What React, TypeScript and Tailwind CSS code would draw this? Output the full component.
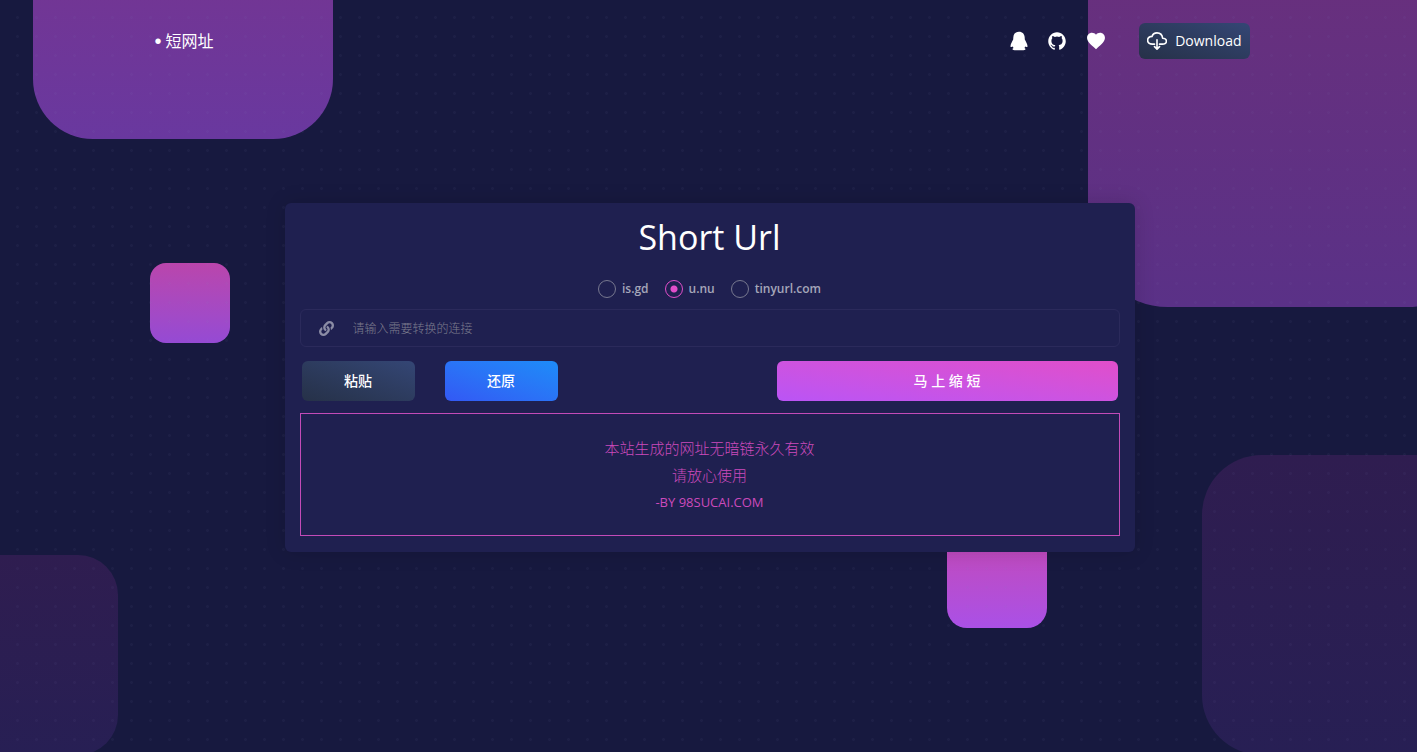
import type { ButtonHTMLAttributes } from 'react';
import { FaLink } from 'react-icons/fa';
import { IoMdHeart } from 'react-icons/io';
import { IoCloudDownloadOutline, IoLogoGithub } from 'react-icons/io5';

function QqIcon() {
  return (
    <svg viewBox="0 0 20 20" className="size-5 fill-current" aria-hidden="true">
      <path d="M10 .8C6.400.8 4.500 3.200 4.300 6.500L4.200 8.600C3.200 10.400 1.700 13 1.500 15c-.1.900.3 1.200.9 1.100l1.300-.5c.2.600.5 1.100.9 1.500-.8.200-1.200.6-1.100 1.100.2.800 1.500 1 3.300 1h6.400c1.800 0 3.100-.2 3.300-1 .1-.5-.3-.9-1.100-1.100.4-.4.7-.9.900-1.500l1.300.5c.6.100 1-.2.900-1.100-.2-2-1.700-4.600-2.700-6.400l-.1-2.100C15.500 3.200 13.600.8 10 .8Z" />
    </svg>
  );
}

const shapes = [
  'left-[33px] -top-[161px] size-[300px] rounded-[60px] from-[#7b3289] to-[#69389f]',
  'left-[1088px] -top-[93px] size-[400px] rounded-[80px] from-[#6b2f7b] to-[#5a3187]',
  'left-[150px] top-[263px] size-20 rounded-2xl from-[#ba45ac] to-[#954ad4]',
  'left-[947px] top-[528px] size-[100px] rounded-[20px] from-[#c647b4] to-[#aa50e6]',
  '-left-[82px] top-[555px] size-[200px] rounded-[40px] from-[#2f1d50] to-[#271f54]',
  'left-[1202px] top-[455px] size-[300px] rounded-[60px] from-[#2f1d50] to-[#271f54]',
];

function Backdrop() {
  return (
    <div className="absolute inset-0 overflow-hidden" aria-hidden="true">
      {shapes.map((shape) => (
        <div key={shape} className={`absolute bg-linear-to-b ${shape}`} />
      ))}
      <div className="absolute inset-0 bg-[radial-gradient(circle_at_center,rgba(130,130,190,0.06)_1px,transparent_2px)] bg-[size:19px_19px] bg-[position:8px_8px]" />
    </div>
  );
}

function ActionButton({ className = '', ...props }: ButtonHTMLAttributes<HTMLButtonElement>) {
  return (
    <button
      type="button"
      className={`h-10 rounded-md text-sm font-medium text-white ${className}`}
      {...props}
    />
  );
}

const services = ['is.gd', 'u.nu', 'tinyurl.com'];

export default function App() {
  return (
    <div className="relative min-h-screen bg-[#17193f] font-['Open_Sans','Noto_Sans_CJK_SC',sans-serif] text-white">
      <Backdrop />
      <div className="relative pl-[2px]">
        <header className="mx-auto flex h-[82px] max-w-[1110px] items-center justify-between pr-[15px]">
          <a href="#" className="flex items-center gap-1 text-base">
            <span className="font-['Liberation_Sans',sans-serif] text-xl leading-6">•</span>
            短网址
          </a>
          <nav className="flex items-center">
            <div className="mr-8 flex items-center gap-[18px]">
              <a href="#qq" aria-label="QQ"><QqIcon /></a>
              <a href="#github" aria-label="GitHub"><IoLogoGithub className="size-5" /></a>
              <a href="#like" aria-label="Like"><IoMdHeart className="size-[22px]" /></a>
            </div>
            <a
              href="#download"
              className="flex h-9 items-center gap-2 rounded-md bg-linear-to-tr from-[#263148] to-[#344675] px-2 text-sm font-medium"
            >
              <IoCloudDownloadOutline className="size-5 [&_path]:[stroke-width:42px]" />
              Download
            </a>
          </nav>
        </header>

        <main className="mx-auto mt-[121px] w-full max-w-[850px] rounded-md bg-[#1f2050] px-[15px] pt-3 pb-4 shadow-[0_0_20px_rgba(0,0,0,0.15)]">
          <h1 className="text-center text-[34px] leading-[44px] font-medium">Short Url</h1>
          <form onSubmit={(e) => e.preventDefault()}>
            <div role="radiogroup" aria-label="Short Url" className="mt-5 flex h-5 items-center justify-center gap-4">
              {services.map((name) => (
                <label key={name} className="flex items-center gap-[6px] text-xs font-semibold text-[#a5a6b9]">
                  <input
                    type="radio"
                    name="service"
                    value={name}
                    defaultChecked={name === 'u.nu'}
                    className="size-[18px] appearance-none rounded-full border border-[#77788f] checked:border-[#e14eca] checked:bg-[radial-gradient(circle,#e14eca_3px,transparent_4px)]"
                  />
                  {name}
                </label>
              ))}
            </div>

            <label className="mt-[10px] flex h-[38px] items-center rounded-md border border-[#2b2a5b] pl-[18px]">
              <FaLink className="size-[15px] text-[#8b8ca5]" aria-hidden="true" />
              <input
                type="url"
                aria-label="请输入需要转换的连接"
                placeholder="请输入需要转换的连接"
                className="ml-[19px] h-full flex-1 bg-transparent text-xs font-light outline-none placeholder:text-[#7c7c8e]"
              />
            </label>

            <div className="mt-[14px] flex px-[2px]">
              <ActionButton className="w-[113px] bg-linear-to-tr from-[#263148] to-[#344675]">粘贴</ActionButton>
              <ActionButton className="ml-[30px] w-[113px] bg-linear-to-tr from-[#3358f4] to-[#1d8cf8]">还原</ActionButton>
              <ActionButton type="submit" className="ml-auto w-[341px] bg-linear-to-tr from-[#ba54f5] to-[#e14eca]">
                马 上 缩 短
              </ActionButton>
            </div>
          </form>

          <section className="mt-3 border border-[#c24bb8] px-4 pt-[21px] pb-[19px] text-center text-[#cc4abc]">
            <p className="text-[15px] leading-[27px] font-light">本站生成的网址无暗链永久有效</p>
            <p className="text-[15px] leading-[27px] font-light">请放心使用</p>
            <p className="text-[13px] leading-[27px]">-BY 98SUCAI.COM</p>
          </section>
        </main>
      </div>
    </div>
  );
}
